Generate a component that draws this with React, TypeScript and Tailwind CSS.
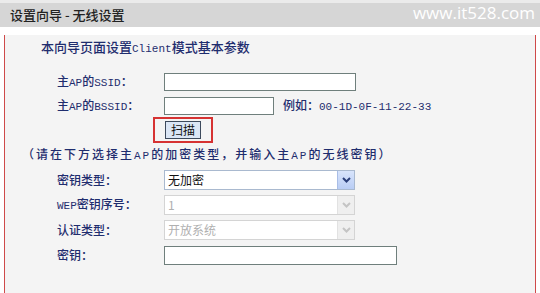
const cjk = '"Noto Sans CJK SC", "Liberation Sans", sans-serif';
const mono = '"Liberation Mono", "Noto Sans CJK SC", monospace';

function A({ children }: { children: React.ReactNode }) {
  return (
    <span className="text-[11px]" style={{ fontFamily: mono }}>
      {children}
    </span>
  );
}

function Chevron({ disabled }: { disabled?: boolean }) {
  return (
    <div
      className={
        "w-[17px] h-[18px] flex items-center justify-center border-l " +
        (disabled
          ? "bg-[#efefef] border-[#e2e2e2]"
          : "bg-gradient-to-b from-[#d8e4fb] to-[#b9cdf5] border-[#a9bde6]")
      }
    >
      <svg width="9" height="6" viewBox="0 0 9 6">
        <path
          d="M1 1 L4.5 4.5 L8 1"
          fill="none"
          stroke={disabled ? "#c4c4c4" : "#2b3f7a"}
          strokeWidth="2"
        />
      </svg>
    </div>
  );
}

function Select({ value, disabled }: { value: string; disabled?: boolean }) {
  return (
    <div
      className={
        "w-[191px] h-[20px] flex items-center justify-between bg-white border " +
        (disabled ? "border-[#d4d4d4]" : "border-[#a9b9cf]")
      }
    >
      <span
        className={
          "pl-[3px] text-[12px] leading-none " +
          (disabled ? "text-[#b0b0b0]" : "text-[#111]")
        }
      >
        {value}
      </span>
      <Chevron disabled={disabled} />
    </div>
  );
}

function Row({
  label,
  h = 25,
  children,
}: {
  label: React.ReactNode;
  h?: number;
  children: React.ReactNode;
}) {
  return (
    <div className="flex items-center pl-[52px]" style={{ height: h }}>
      <div className="w-[107px] text-[12px] text-[#1f2d6e] font-medium">
        <span>{label}</span>
      </div>
      {children}
    </div>
  );
}

export default function App() {
  return (
    <div className="w-[540px] h-[293px] bg-white overflow-hidden" style={{ fontFamily: cjk }}>
      <div className="h-[27px] border-t-[3px] border-[#ebebeb] bg-[#d6d6d6] flex items-center justify-between pl-[10px] pr-[5px]">
        <span className="text-[13px] text-[#222] font-medium">设置向导 - 无线设置</span>
        <span
          className="text-[17px] text-white -mt-[5px]"
          style={{ fontFamily: '"Open Sans", sans-serif' }}
        >
          www.it528.com
        </span>
      </div>
      <div className="ml-[4px] w-[532px] h-[263px] border-x border-b border-[#cf4a4a] bg-[#f4f4f4]">
        <div className="h-[24px] mt-[8px] mb-[10px] pl-[36px] flex items-center text-[13px] text-[#1f2d6e] font-medium">
          <span>
            本向导页面设置<A>Client</A>模式基本参数
          </span>
        </div>
        <Row label={<>主<A>AP</A>的<A>SSID</A>：</>}>
          <div className="w-[192px] h-[18px] bg-white border border-[#6f7f7c]" />
        </Row>
        <Row h={23} label={<>主<A>AP</A>的<A>BSSID</A>：</>}>
          <div className="w-[110px] h-[18px] bg-white border border-[#6f7f7c]" />
          <span className="ml-[9px] text-[12px] text-[#1f2d6e] font-medium">
            例如：<A>00-1D-0F-11-22-33</A>
          </span>
        </Row>
        <div className="h-[26px] pl-[148px] flex items-center">
          <div className="w-[60px] h-[26px] border-2 border-[#d63232] flex items-center justify-center">
            <div className="w-[36px] h-[18px] bg-[#dbe6f5] border border-[#3d4a5c] text-[12px] text-[#111] flex items-center justify-center leading-none">
              扫描
            </div>
          </div>
        </div>
        <div className="h-[24px] pl-[17px] flex items-center text-[12px] tracking-[2px] text-[#1f2d6e] font-medium">
          <span>
            （请在下方选择主<A>AP</A>的加密类型，并输入主<A>AP</A>的无线密钥）
          </span>
        </div>
        <Row label="密钥类型：">
          <Select value="无加密" />
        </Row>
        <Row label={<><A>WEP</A>密钥序号：</>}>
          <Select value="1" disabled />
        </Row>
        <Row label="认证类型：">
          <Select value="开放系统" disabled />
        </Row>
        <Row h={26} label="密钥：">
          <div className="w-[233px] h-[19px] bg-white border border-[#6f7f7c]" />
        </Row>
      </div>
    </div>
  );
}
